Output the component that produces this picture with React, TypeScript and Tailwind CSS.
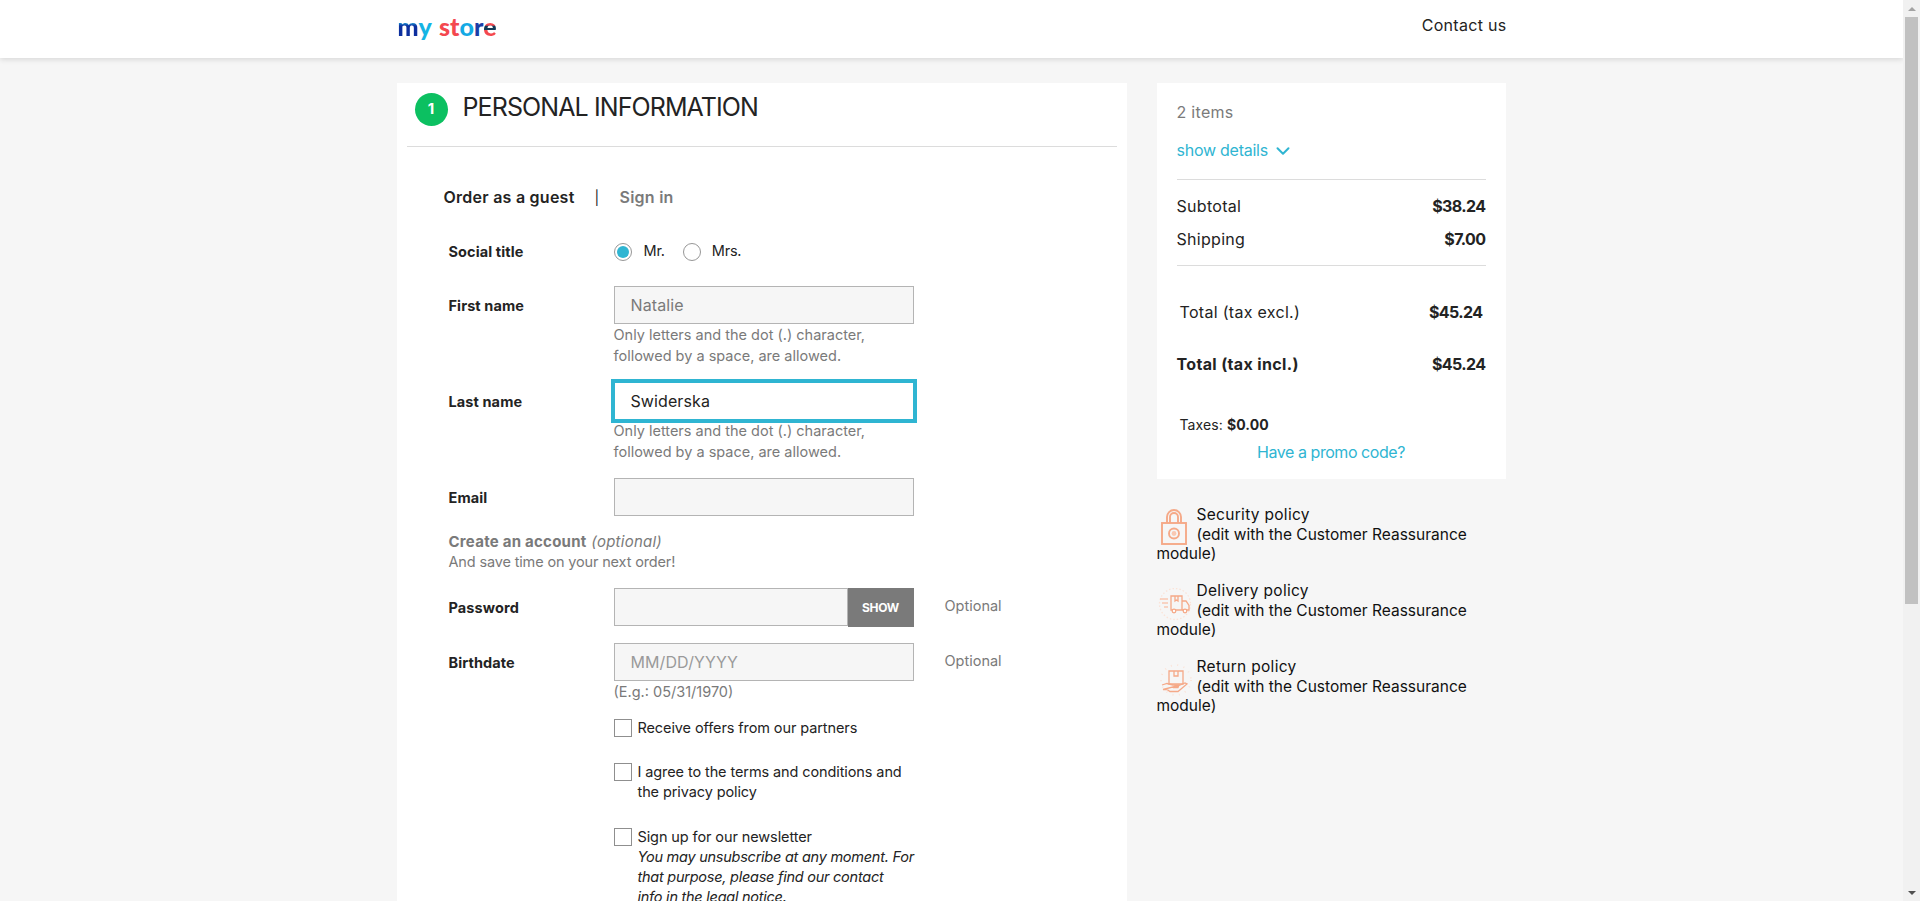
import { ChevronDown } from 'lucide-react';

const font = { fontFamily: 'Inter, sans-serif' };

function LockIcon() {
  return (
    <svg viewBox="0 0 32 40" className="float-left mb-[-8px] mr-[6px] mt-[3px] h-[40px] w-[34px]" fill="none" stroke="#f5a988" strokeWidth="1.9">
      <rect x="4" y="15" width="24" height="21" />
      <path d="M9 15V9a7 7 0 0 1 14 0v6M12 15V9a4 4 0 0 1 8 0v6" />
      <circle cx="16" cy="25.5" r="5" />
      <circle cx="16" cy="25.5" r="2.4" fill="#f9c8b2" stroke="none" />
    </svg>
  );
}

function TruckIcon() {
  return (
    <svg viewBox="0 0 36 40" className="float-left mb-[-8px] mr-[4px] mt-[3px] h-[40px] w-[36px]" fill="none" stroke="#f5a988" strokeWidth="1.3">
      <circle cx="18" cy="20" r="15.5" stroke="#fbe3d8" strokeDasharray="1.5 2" />
      <path d="M14 12h11v14H14zM18 12v5l1.5-1 1.500 1v-5" />
      <path d="M25 17h4l3 4.500V26h-7" />
      <circle cx="17" cy="27" r="1.800" fill="#fff" />
      <circle cx="28" cy="27" r="1.800" fill="#fff" />
      <path d="M3 15h8M5 19h6M7 23h4" stroke="#f9c8b2" />
    </svg>
  );
}

function HandBoxIcon() {
  return (
    <svg viewBox="0 0 36 40" className="float-left mb-[-8px] mr-[4px] mt-[4px] h-[40px] w-[36px]" fill="none" stroke="#f5a988" strokeWidth="1.3">
      <circle cx="19" cy="19" r="15" stroke="#fbe3d8" strokeDasharray="1 5.500" strokeWidth="1.800" />
      <path d="M12 10h14v13H12zM17 10v5h4v-5" />
      <path d="M5 24l5-1.500 6 1.500h6l-1 2.500h-5M22 24.500l6-2.500 2 1-9 7.500h-8l-3-2H6z" />
    </svg>
  );
}

function Field({ label, value, hint, optional, focus, placeholder, button }: {
  label: string;
  value?: string;
  hint?: React.ReactNode;
  optional?: boolean;
  focus?: boolean;
  placeholder?: string;
  button?: boolean;
}) {
  return (
    <div className="flex">
      <div className="flex h-[38px] w-[165px] items-center pt-[1px] text-[14.5px] font-bold tracking-[0.1px] text-[#232323]">{label}</div>
      <div className="w-[300px]">
        <div className="flex">
          <div
            className={
              focus
                ? 'flex h-[38px] flex-1 items-center border border-[#2fb5d2] bg-white pl-[16px] text-[16px] tracking-[0.1px] text-[#232323] outline-[3px] outline-[#2fb5d2]'
                : 'flex h-[38px] flex-1 items-center border border-[#b4b4b4] bg-[#f6f6f6] pl-[16px] text-[16px] tracking-[0.1px] text-[#7a7a7a]'
            }
          >
            {value}
            {placeholder && <span className="text-[#9a9a9a]">{placeholder}</span>}
          </div>
          {button && (
            <div className="flex h-[39px] w-[66px] items-center justify-center bg-[#7a7a7a] text-[12px] font-bold tracking-[-0.3px] text-white">SHOW</div>
          )}
        </div>
        {hint && <div className="text-[14.5px] leading-[21px] text-[#7a7a7a]">{hint}</div>}
      </div>
      {optional && <div className="ml-[31px] flex h-[36px] items-center text-[14.5px] text-[#7a7a7a]">Optional</div>}
    </div>
  );
}

function Check({ children }: { children: React.ReactNode }) {
  return (
    <div className="ml-[165px] flex w-[320px] gap-[6px]">
      <div className="mt-[1px] h-[18px] w-[18px] shrink-0 border border-[#8f8f8f] bg-white" />
      <div className="text-[14.5px] leading-[20px] tracking-[-0.1px] text-[#232323]">{children}</div>
    </div>
  );
}

function Policy({ title, icon }: { title: string; icon: React.ReactNode }) {
  return (
    <div className="h-[76px] text-[15.5px] leading-[19.5px] text-[#111]">
      {icon}
      <div className="tracking-[0.3px]">{title}</div>
      <span>(edit with the Customer Reassurance module)</span>
    </div>
  );
}

export default function App() {
  const hint = <>Only letters and the dot (.) character,<br />followed by a space, are allowed.</>;

  return (
    <div className="flex h-screen overflow-hidden bg-[#f6f6f6]" style={font}>
      <div className="min-w-0 flex-1">
        {/* Header */}
        <header className="h-[58px] bg-white shadow-[0_2px_5px_rgba(0,0,0,0.11)]">
          <div className="mx-auto flex h-full w-[1110px] items-start justify-between">
            <div className="ml-[1px] mt-[8px] flex text-[25px] leading-[36px] font-black" style={{ fontFamily: 'Lato, sans-serif' }}>
              <span className="bg-[linear-gradient(180deg,#e23d9f_0%,#1fb4e4_38%,#0d2f9e_50%)] bg-clip-text text-transparent">m</span>
              <span className="mr-[7px] text-[#14b4e4]">y</span>
              <span className="text-[#f4484f]">s</span>
              <span className="text-[#f4484f]">t</span>
              <span className="text-[#14a9e4]">o</span>
              <span className="text-[#1b3ea6]">r</span>
              <span className="bg-[linear-gradient(180deg,#f4484f_0%,#f4484f_48%,#123a57_50%,#123a57_60%,#f4484f_62%)] bg-clip-text text-transparent">e</span>
            </div>
            <a className="mt-[13px] text-[16px] tracking-[0.3px] text-[#232323]">Contact us</a>
          </div>
        </header>

        <div className="mx-auto mt-[25px] flex w-[1110px] gap-[30px]">
          {/* Checkout form */}
          <main className="h-[900px] w-[730px] bg-white px-[10px]">
            <div className="flex h-[64px] items-start border-b border-[#dcdcdc] pl-[8px] pt-[10px]">
              <div className="flex h-[33px] w-[33px] items-center justify-center rounded-full bg-[#0cc061] text-[15px] font-bold text-white">1</div>
              <h1 className="ml-[15px] mt-[-2px] text-[25px] leading-[32px] tracking-[-0.9px] text-[#232323]">PERSONAL INFORMATION</h1>
            </div>

            <div className="ml-[37px] mt-[40px] flex h-[20px] items-center text-[16px] font-semibold tracking-[0.25px]">
              <span className="text-[#232323]">Order as a guest</span>
              <span className="mx-[20px] text-[14px] font-normal text-[#232323]">|</span>
              <span className="text-[#7a7a7a]">Sign in</span>
            </div>

            <div className="ml-[42px] mt-[33px]">
              <div className="flex h-[38px] items-start">
                <div className="flex h-[24px] w-[165px] items-center text-[14.5px] font-bold tracking-[0.1px] text-[#232323]">Social title</div>
                <div className="flex items-center pt-[3px] text-[14.5px] tracking-[-0.2px] text-[#232323]">
                  <span className="flex h-[18px] w-[18px] items-center justify-center rounded-full border border-[#979797]">
                    <span className="h-[12px] w-[12px] rounded-full bg-[#2fb5d2]" />
                  </span>
                  <span className="ml-[12px] mt-[-3px]">Mr.</span>
                  <span className="ml-[18px] h-[18px] w-[18px] rounded-full border border-[#979797]" />
                  <span className="ml-[11px] mt-[-3px]">Mrs.</span>
                </div>
              </div>

              <div className="mt-[8px]"><Field label="First name" value="Natalie" hint={hint} /></div>
              <div className="mt-[16px]"><Field label="Last name" value="Swiderska" focus hint={hint} /></div>
              <div className="mt-[16px]"><Field label="Email" /></div>

              <div className="mt-[15px] text-[15px] leading-[21px] font-bold tracking-[0.25px] text-[#7a7a7a]">
                Create an account <em className="ml-[1px] font-normal">(optional)</em>
              </div>
              <div className="text-[14.5px] leading-[20px] tracking-[-0.15px] text-[#7a7a7a]">And save time on your next order!</div>

              <div className="mt-[16px]"><Field label="Password" optional button /></div>
              <div className="mt-[16px]"><Field label="Birthdate" placeholder="MM/DD/YYYY" optional hint="(E.g.: 05/31/1970)" /></div>

              <div className="mt-[16px]"><Check>Receive offers from our partners</Check></div>
              <div className="mt-[24px]"><Check>I agree to the terms and conditions and<br />the privacy policy</Check></div>
              <div className="mt-[25px]">
                <Check>
                  Sign up for our newsletter<br />
                  <em className="tracking-[-0.25px]">You may unsubscribe at any moment. For<br />that purpose, please find our contact<br />info in the legal notice.</em>
                </Check>
              </div>
            </div>
          </main>

          {/* Cart summary */}
          <aside className="w-[349px]">
            <div className="h-[396px] bg-white pl-[20px] pr-[20px] pt-[18px] text-[16px] tracking-[0.3px] text-[#232323]">
              <div className="leading-[22px] text-[#7a7a7a]">2 items</div>
              <div className="mt-[15px] flex items-center leading-[22px] tracking-[-0.25px] text-[#2fb5d2]">
                show details
                <ChevronDown size={22} strokeWidth={2.2} className="ml-[4px] mt-[2px]" />
              </div>
              <div className="mt-[17px] border-t border-[#dcdcdc] pt-[15px]">
                <div className="flex justify-between leading-[22px]"><span>Subtotal</span><b className="font-bold tracking-[-0.6px]">$38.24</b></div>
                <div className="mt-[11px] flex justify-between leading-[22px]"><span>Shipping</span><b className="font-bold tracking-[-0.6px]">$7.00</b></div>
              </div>
              <div className="mt-[15px] border-t border-[#dcdcdc] px-[3px] pt-[35px]">
                <div className="flex justify-between leading-[22px]"><span>Total (tax excl.)</span><b className="font-bold tracking-[-0.6px]">$45.24</b></div>
              </div>
              <div className="mt-[30px] flex justify-between font-bold leading-[22px]"><span className="tracking-[0.35px]">Total (tax incl.)</span><span className="tracking-[-0.6px]">$45.24</span></div>
              <div className="ml-[3px] mt-[39px] text-[14px] leading-[22px] tracking-[0.1px]">Taxes: <b className="font-bold">$0.00</b></div>
              <div className="mt-[5px] text-center leading-[22px] tracking-[-0.45px] text-[#2fb5d2]">Have a promo code?</div>
            </div>

            <div className="mt-[26px]">
              <Policy title="Security policy" icon={<LockIcon />} />
              <Policy title="Delivery policy" icon={<TruckIcon />} />
              <Policy title="Return policy" icon={<HandBoxIcon />} />
            </div>
          </aside>
        </div>
      </div>

      {/* Scrollbar */}
      <div className="flex w-[17px] shrink-0 flex-col items-center bg-[#f1f1f1]">
        <div className="flex h-[17px] items-center justify-center">
          <div className="h-0 w-0 border-x-[4px] border-b-[4px] border-x-transparent border-b-[#a3a3a3]" />
        </div>
        <div className="h-[587px] w-[13px] bg-[#c1c1c1]" />
        <div className="flex-1" />
        <div className="flex h-[17px] items-center justify-center">
          <div className="h-0 w-0 border-x-[4px] border-t-[4px] border-x-transparent border-t-[#505050]" />
        </div>
      </div>
    </div>
  );
}
